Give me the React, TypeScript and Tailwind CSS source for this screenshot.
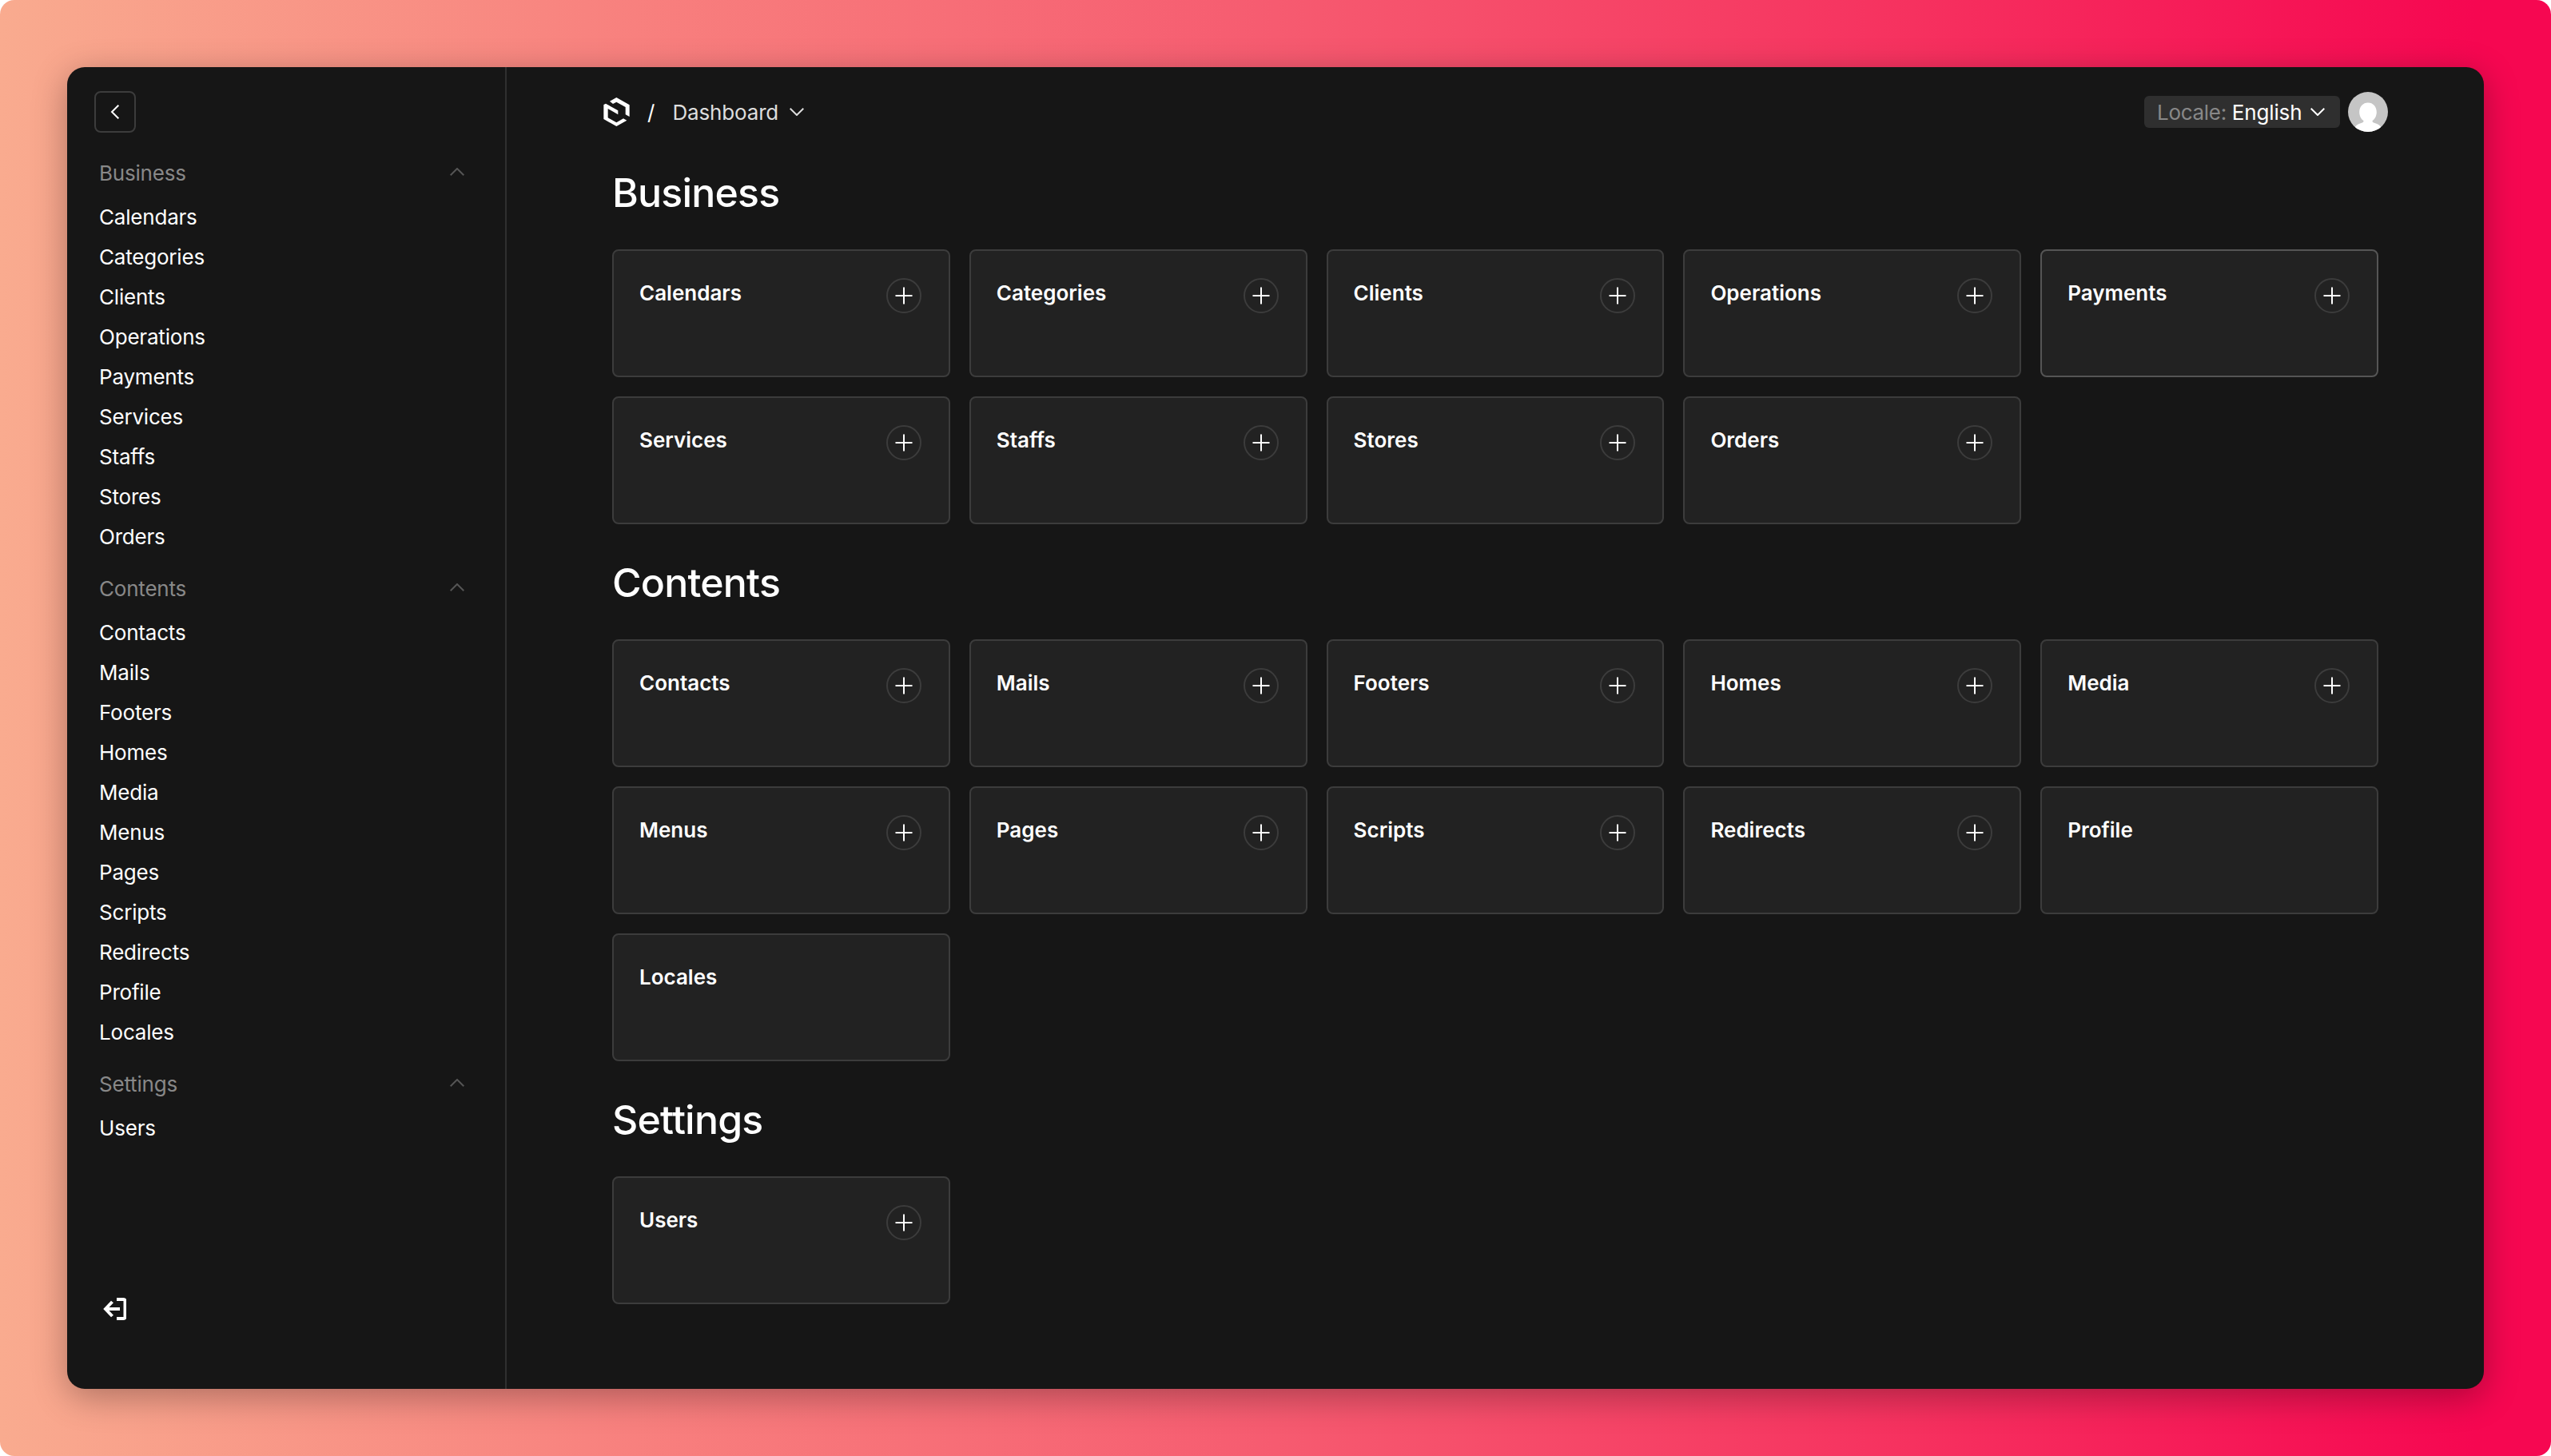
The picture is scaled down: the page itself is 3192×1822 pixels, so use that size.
import React from "react";

type Item = { name: string; create?: boolean; active?: boolean };
type Group = { title: string; items: Item[] };

const groups: Group[] = [
  {
    title: "Business",
    items: [
      { name: "Calendars", create: true },
      { name: "Categories", create: true },
      { name: "Clients", create: true },
      { name: "Operations", create: true },
      { name: "Payments", create: true, active: true },
      { name: "Services", create: true },
      { name: "Staffs", create: true },
      { name: "Stores", create: true },
      { name: "Orders", create: true },
    ],
  },
  {
    title: "Contents",
    items: [
      { name: "Contacts", create: true },
      { name: "Mails", create: true },
      { name: "Footers", create: true },
      { name: "Homes", create: true },
      { name: "Media", create: true },
      { name: "Menus", create: true },
      { name: "Pages", create: true },
      { name: "Scripts", create: true },
      { name: "Redirects", create: true },
      { name: "Profile" },
      { name: "Locales" },
    ],
  },
  { title: "Settings", items: [{ name: "Users", create: true }] },
];

function Chevron({ className, up = false }: { className: string; up?: boolean }) {
  return (
    <svg width="18" height="10" viewBox="0 0 18 10" fill="none" stroke="currentColor" strokeWidth="2" className={className}>
      <path d={up ? "M0.7 9.3 9 1l8.3 8.3" : "M0.7 0.7 9 9l8.3-8.3"} />
    </svg>
  );
}

function Logo() {
  return (
    <svg width="33" height="36" viewBox="75 96 99 108" fill="#fff">
      <path d="M99 110 124 96l49 28v44l-15-8v-28l-34-19-13 7z" />
      <path d="M76 123l8-4 46 26v15L92 138v34l32 18 26-15 13 7-39 22-48-27z" />
    </svg>
  );
}

function Avatar() {
  return (
    <div className="size-[50px] overflow-hidden rounded-full bg-[#c5c5c5]">
      <svg width="50" height="50" viewBox="0 0 50 50" fill="#fff">
        <path d="M25 13.6c6.2 0 10.8 4.8 10.8 11.6 0 4.6-2.1 8.8-5.3 10.9 0 1.8.8 2.3 3 2.8 4 .9 6.8 3 8.5 6.3V50H8v-4.8c1.7-3.3 4.5-5.4 8.5-6.3 2.2-.5 3-1 3-2.8-3.2-2.1-5.3-6.3-5.3-10.9 0-6.8 4.6-11.6 10.8-11.6z" />
      </svg>
    </div>
  );
}

function Sidebar() {
  return (
    <aside className="flex w-[550px] shrink-0 flex-col border-r-2 border-[#2f2f2f] pt-[30px] pb-[86px]">
      <button className="ml-[34px] flex size-[52px] items-center justify-center rounded-lg border-2 border-[#3c3c3c] text-white">
        <svg width="12" height="18" viewBox="0 0 12 18" fill="none" stroke="currentColor" strokeWidth="2">
          <path d="M10.3 0.7 2 9l8.3 8.3" />
        </svg>
      </button>
      <nav className="mt-[26px] flex flex-col gap-[15px] pr-[51px] pl-[40px] text-[26px] leading-[50px] tracking-[-0.2px]">
        {groups.map((g) => (
          <div key={g.title}>
            <div className="mb-[5px] flex items-center justify-between text-[#888888]">
              <span>{g.title}</span>
              <Chevron up className="-mt-1 text-[#555555]" />
            </div>
            {g.items.map((i) => (
              <a key={i.name} className="block text-white">
                {i.name}
              </a>
            ))}
          </div>
        ))}
      </nav>
      <button className="mt-auto ml-[44px] w-[30px] text-white">
        <svg width="30" height="28" viewBox="0 0 30 28" fill="none" stroke="currentColor" strokeWidth="4">
          <path d="M18 2h8.5q2 0 2 2v20q0 2-2 2H18" />
          <path d="M22 14H4M12.5 5 4 14l8.5 9" />
        </svg>
      </button>
    </aside>
  );
}

function Header() {
  return (
    <header className="flex h-[50px] items-center text-[26px] leading-[40px]">
      <Logo />
      <span className="ml-[22px] pt-px text-white">/</span>
      <div className="ml-[22px] flex items-center text-[#dddddd]">
        <span className="pt-px tracking-[-0.15px]">Dashboard</span>
        <Chevron className="ml-[14px]" />
      </div>
      <div className="ml-auto flex h-[40px] w-[245px] items-center rounded-md bg-[#2f2f2f] pl-[16px]">
        <span className="pt-px tracking-[-0.3px] text-[#888888]">Locale:</span>
        <span className="ml-[7px] pt-px tracking-[-0.15px] text-white">English</span>
        <Chevron className="ml-[11px] text-white" />
      </div>
      <div className="ml-[10px]">
        <Avatar />
      </div>
    </header>
  );
}

function Card({ item }: { item: Item }) {
  return (
    <div
      className={`flex h-[160px] items-start justify-between rounded-lg border-2 bg-[#222222] pt-[34px] pr-[34px] pl-[32px] ${
        item.active ? "border-[#555555]" : "border-[#3c3c3c]"
      }`}
    >
      <span className="text-[26px] leading-[38px] font-semibold text-white">{item.name}</span>
      {item.create && (
        <button className="flex size-[44px] items-center justify-center rounded-full border-2 border-[#3c3c3c] text-white">
          <svg width="22" height="22" viewBox="0 0 22 22" stroke="currentColor" strokeWidth="2">
            <path d="M11 0.500v21M0.500 11h21" />
          </svg>
        </button>
      )}
    </div>
  );
}

export default function App() {
  return (
    <div className="bg-white">
      <div className="h-[1822px] w-[3192px] rounded-[18px] bg-[linear-gradient(90deg,#f9ab8f_0%,#f8837f_23%,#f65b70_50%,#f6315f_75%,#f60751_97%)] p-[84px] font-['Inter',sans-serif]">
        <div className="flex h-[1654px] w-[3024px] overflow-hidden rounded-[22px] bg-[#161616] shadow-[0_10px_44px_rgba(0,0,0,0.3)]">
          <Sidebar />
          <main className="flex-1 pt-[31px] pr-[120px] pl-[121px]">
            <Header />
            <div className="pr-[12px] pl-[11px]">
              {groups.map((g, n) => (
                <section key={g.title} className={n === 0 ? "pt-[46px]" : "pt-[43px]"}>
                  <h2 className="text-[50px] leading-[60px] font-medium tracking-[-0.8px] text-white">{g.title}</h2>
                  <div className="mt-[41px] grid grid-cols-5 gap-6">
                    {g.items.map((i) => (
                      <Card key={i.name} item={i} />
                    ))}
                  </div>
                </section>
              ))}
            </div>
          </main>
        </div>
      </div>
    </div>
  );
}
